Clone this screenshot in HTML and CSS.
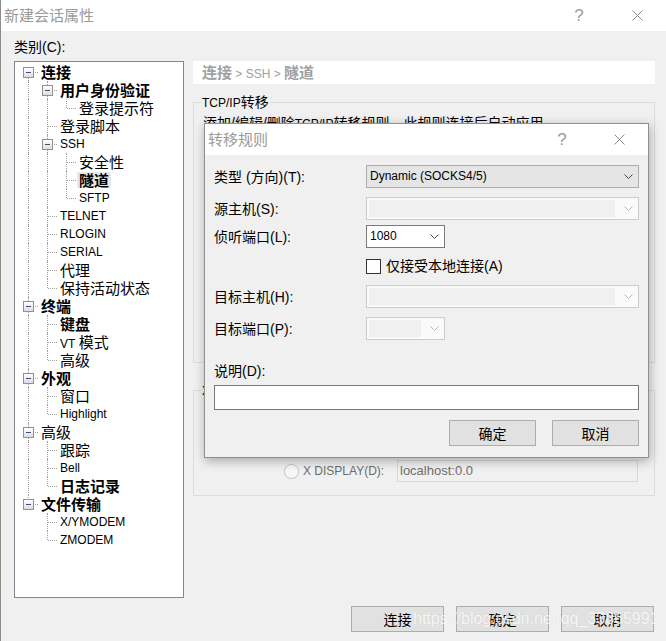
FILE: index.html
```html
<!DOCTYPE html>
<html lang="zh-CN">
<head>
<meta charset="utf-8">
<title>新建会话属性</title>
<link rel="stylesheet" href="styles.css">
</head>
<body>
<div class="window">
  <div class="titlebar">
    <span class="title">新建会话属性</span>
    <span class="tb-btn tb-help">?</span>
    <span class="tb-btn"><svg class="x-icon" viewBox="0 0 11 11"><path d="M0.5 0.5L10.5 10.5M10.5 0.5L0.5 10.5"/></svg></span>
  </div>

  <div class="main">
    <div class="left">
      <div class="cat-label">类别(C):</div>
      <div class="tree">
        <div class="row"><span class="c f"><i class="bx"></i></span><span class="lb b">连接</span></div>
        <div class="row"><span class="c i"></span><span class="c t"><i class="bx"></i></span><span class="lb b">用户身份验证</span></div>
        <div class="row"><span class="c i"></span><span class="c i"></span><span class="c l"></span><span class="lb">登录提示符</span></div>
        <div class="row"><span class="c i"></span><span class="c t"></span><span class="lb">登录脚本</span></div>
        <div class="row"><span class="c i"></span><span class="c t"><i class="bx"></i></span><span class="lb en">SSH</span></div>
        <div class="row"><span class="c i"></span><span class="c i"></span><span class="c t"></span><span class="lb">安全性</span></div>
        <div class="row"><span class="c i"></span><span class="c i"></span><span class="c t"></span><span class="lb b sel">隧道</span></div>
        <div class="row"><span class="c i"></span><span class="c i"></span><span class="c l"></span><span class="lb en">SFTP</span></div>
        <div class="row"><span class="c i"></span><span class="c t"></span><span class="lb en">TELNET</span></div>
        <div class="row"><span class="c i"></span><span class="c t"></span><span class="lb en">RLOGIN</span></div>
        <div class="row"><span class="c i"></span><span class="c t"></span><span class="lb en">SERIAL</span></div>
        <div class="row"><span class="c i"></span><span class="c t"></span><span class="lb">代理</span></div>
        <div class="row"><span class="c i"></span><span class="c l"></span><span class="lb">保持活动状态</span></div>
        <div class="row"><span class="c t"><i class="bx"></i></span><span class="lb b">终端</span></div>
        <div class="row"><span class="c i"></span><span class="c t"></span><span class="lb b">键盘</span></div>
        <div class="row"><span class="c i"></span><span class="c t"></span><span class="lb"><span class="en">VT</span> 模式</span></div>
        <div class="row"><span class="c i"></span><span class="c l"></span><span class="lb">高级</span></div>
        <div class="row"><span class="c t"><i class="bx"></i></span><span class="lb b">外观</span></div>
        <div class="row"><span class="c i"></span><span class="c t"></span><span class="lb">窗口</span></div>
        <div class="row"><span class="c i"></span><span class="c l"></span><span class="lb en">Highlight</span></div>
        <div class="row"><span class="c t"><i class="bx"></i></span><span class="lb">高级</span></div>
        <div class="row"><span class="c i"></span><span class="c t"></span><span class="lb">跟踪</span></div>
        <div class="row"><span class="c i"></span><span class="c t"></span><span class="lb en">Bell</span></div>
        <div class="row"><span class="c i"></span><span class="c l"></span><span class="lb b">日志记录</span></div>
        <div class="row"><span class="c l"><i class="bx"></i></span><span class="lb b">文件传输</span></div>
        <div class="row"><span class="c"></span><span class="c t"></span><span class="lb en">X/YMODEM</span></div>
        <div class="row"><span class="c"></span><span class="c l"></span><span class="lb en">ZMODEM</span></div>
      </div>
    </div>

    <div class="right">
      <div class="crumb">连接<span class="crumb-sep"> &gt; SSH &gt; </span>隧道</div>
      <fieldset class="group g1">
        <legend><span class="en">TCP/IP</span>转移</legend>
        <div class="g1-body">
          <p>添加/编辑/删除<span class="en">TCP/IP</span>转移规则，此规则连接后自动应用</p>
        </div>
      </fieldset>
      <fieldset class="group g2">
        <legend><span class="en">X11</span>转移</legend>
        <div class="g2-body">
          <div class="xrow">
            <span class="radio"></span>
            <span class="xlabel">X DISPLAY(D):</span>
            <span class="xinput">localhost:0.0</span>
          </div>
        </div>
      </fieldset>
    </div>
  </div>

  <div class="footer">
    <button class="btn">连接</button>
    <button class="btn">确定</button>
    <button class="btn">取消</button>
  </div>

  <div class="dialog">
    <div class="dlg-title">
      <span class="title">转移规则</span>
      <span class="tb-btn dlg-help">?</span>
      <span class="tb-btn"><svg class="x-icon" viewBox="0 0 11 11"><path d="M0.5 0.5L10.5 10.5M10.5 0.5L0.5 10.5"/></svg></span>
    </div>
    <div class="dlg-body">
      <div class="frow">
        <span class="flabel">类型 (方向)(T):</span>
        <div class="combo wide list"><span class="val">Dynamic (SOCKS4/5)</span><svg class="chev" viewBox="0 0 9 5"><path d="M0.5 0.5L4.5 4.5L8.5 0.5"/></svg></div>
      </div>
      <div class="frow r2">
        <span class="flabel">源主机(S):</span>
        <div class="combo wide dis"><span class="inner"></span><svg class="chev" viewBox="0 0 9 5"><path d="M0.5 0.5L4.5 4.5L8.5 0.5"/></svg></div>
      </div>
      <div class="frow r3">
        <span class="flabel">侦听端口(L):</span>
        <div class="combo narrow edit"><span class="val">1080</span><svg class="chev" viewBox="0 0 9 5"><path d="M0.5 0.5L4.5 4.5L8.5 0.5"/></svg></div>
      </div>
      <div class="cbx-row">
        <span class="cbx"></span><span class="cbx-text">仅接受本地连接(A)</span>
      </div>
      <div class="frow r5">
        <span class="flabel">目标主机(H):</span>
        <div class="combo wide dis"><span class="inner"></span><svg class="chev" viewBox="0 0 9 5"><path d="M0.5 0.5L4.5 4.5L8.5 0.5"/></svg></div>
      </div>
      <div class="frow r6">
        <span class="flabel">目标端口(P):</span>
        <div class="combo narrow dis"><span class="inner"></span><svg class="chev" viewBox="0 0 9 5"><path d="M0.5 0.5L4.5 4.5L8.5 0.5"/></svg></div>
      </div>
      <div class="desc-label">说明(D):</div>
      <div class="desc-input"></div>
      <div class="dlg-buttons">
        <button class="btn dbtn">确定</button>
        <button class="btn dbtn">取消</button>
      </div>
    </div>
  </div>

  <div class="watermark">https://blog.csdn.net/qq_33865991</div>
</div>
</body>
</html>
```

FILE: styles.css
```css
* {
  box-sizing: border-box;
  margin: 0;
  padding: 0;
}

html, body {
  width: 666px;
  height: 641px;
  overflow: hidden;
}

body {
  background: #f0f0f0;
  border-left: 1px solid #8c8c8c;
  font-family: "Liberation Sans", "Noto Sans CJK SC", sans-serif;
  font-size: 14px;
  color: #000;
}

.en {
  font-size: 12px;
}

.window {
  position: relative;
  width: 665px;
  height: 641px;
  display: flex;
  flex-direction: column;
}

/* title bar */
.titlebar {
  flex: none;
  height: 31px;
  background: #fff;
  display: flex;
  align-items: center;
  padding: 0 6px 0 3px;
}

.title {
  flex: 1;
  font-size: 15px;
  line-height: 20px;
  color: #9a9a9a;
}

.tb-btn {
  width: 46px;
  height: 31px;
  display: flex;
  align-items: center;
  justify-content: center;
  color: #9a9a9a;
  font-size: 17px;
}

.tb-help {
  margin-right: 12px;
}

.x-icon {
  width: 11px;
  height: 11px;
  fill: none;
  stroke: #8a8a8a;
  stroke-width: 1;
}

/* main area */
.main {
  flex: 1;
  display: flex;
  gap: 9px;
  padding: 7px 0 0 13px;
}

.left {
  width: 170px;
  flex: none;
}

.cat-label {
  height: 23px;
  line-height: 18px;
  font-size: 14px;
}

.tree {
  height: 537px;
  border: 1px solid #828790;
  background: #fff;
  padding: 1px 0 0 4px;
  overflow: hidden;
}

.row {
  display: flex;
  align-items: center;
  height: 18px;
}

.c {
  position: relative;
  flex: none;
  width: 19px;
  height: 18px;
}

.c.i::before,
.c.t::before,
.c.l::before,
.c.f::before {
  content: "";
  position: absolute;
  left: 9px;
  top: 0;
  bottom: 0;
  border-left: 1px dotted #a0a0a0;
}

.c.l::before {
  bottom: 9px;
}

.c.f::before {
  top: 9px;
}

.c.t::after,
.c.l::after,
.c.f::after {
  content: "";
  position: absolute;
  left: 10px;
  right: 0;
  top: 9px;
  border-top: 1px dotted #a0a0a0;
}

.bx {
  position: absolute;
  left: 4px;
  top: 4px;
  width: 11px;
  height: 11px;
  border: 1px solid #919191;
  background: linear-gradient(#ffffff, #dedede);
  z-index: 1;
}

.bx::after {
  content: "";
  position: absolute;
  left: 2px;
  top: 4px;
  width: 5px;
  height: 1px;
  background: #3a4f80;
}

.lb {
  margin-left: 1px;
  padding: 0 2px;
  height: 16px;
  line-height: 16px;
  font-size: 15px;
  white-space: nowrap;
  font-family: "Noto Sans CJK SC", "Liberation Sans", sans-serif;
}

.lb .en,
.lb.en {
  font-family: "Liberation Sans", sans-serif;
  font-size: 12px;
}

.lb.b {
  font-weight: 700;
}

.lb.sel {
  background: #e8e8e8;
}

/* right side */
.right {
  width: 462px;
  flex: none;
  padding-top: 23px;
}

.crumb {
  height: 23px;
  line-height: 23px;
  background: #fff;
  padding-left: 9px;
  color: #a0a0a0;
  font-weight: 700;
  font-size: 15px;
}

.crumb-sep {
  font-weight: 400;
  font-size: 12px;
}

.group {
  border: 1px solid #dcdcdc;
  padding: 0 7px;
  min-width: 0;
}

.group legend {
  padding: 0 1px;
  font-size: 14px;
  line-height: 18px;
}

.g1 {
  margin-top: 9px;
}

.g1-body {
  height: 248px;
}

.g1-body p {
  margin: 2px 0 0 2px;
  line-height: 18px;
}

.g2 {
  margin-top: 18px;
}

.g2-body {
  height: 95px;
  display: flex;
  flex-direction: column;
  justify-content: flex-end;
  padding-bottom: 13px;
}

.xrow {
  display: flex;
  align-items: center;
  height: 22px;
  padding-left: 83px;
}

.radio {
  flex: none;
  width: 15px;
  height: 15px;
  border: 1px solid #c4c4c4;
  border-radius: 50%;
  background: #f7f7f7;
}

.xlabel {
  flex: none;
  width: 94px;
  margin-left: 4px;
  color: #6d6d6d;
  font-size: 12px;
}

.xinput {
  flex: none;
  width: 241px;
  height: 22px;
  border: 1px solid #d9d9d9;
  background: #f0f0f0;
  color: #6d6d6d;
  font-size: 13px;
  line-height: 20px;
  padding-left: 2px;
}

/* footer */
.footer {
  flex: none;
  height: 35px;
  display: flex;
  justify-content: flex-end;
  gap: 12px;
  padding-right: 12px;
}

.btn {
  width: 93px;
  height: 26px;
  background: #e1e1e1;
  border: 1px solid #adadad;
  font-family: "Liberation Sans", "Noto Sans CJK SC", sans-serif;
  font-size: 14px;
  color: #000;
  display: flex;
  align-items: center;
  justify-content: center;
}

/* dialog */
.dialog {
  position: absolute;
  left: 203px;
  top: 123px;
  width: 445px;
  height: 335px;
  border: 1px solid #8f8f8f;
  background: #f0f0f0;
  box-shadow: 1px 3px 10px rgba(0, 0, 0, 0.3);
  z-index: 5;
}

.dlg-title {
  height: 31px;
  background: #fff;
  display: flex;
  align-items: center;
  padding: 0 6px 0 3px;
}

.dlg-help {
  margin-right: 11px;
}

.dlg-body {
  padding: 10px 9px 0;
}

.frow {
  display: flex;
  align-items: center;
  height: 23px;
}

.r2 { margin-top: 9px; }
.r3 { margin-top: 5px; }
.r5 { margin-top: 11px; }
.r6 { margin-top: 9px; }

.flabel {
  flex: none;
  width: 152px;
  line-height: 18px;
}

.combo {
  position: relative;
  flex: none;
  height: 23px;
  border: 1px solid #adadad;
}

.combo.wide { width: 273px; }
.combo.narrow { width: 79px; }

.combo.list {
  background: #e5e5e5;
  border-color: #adadad;
}

.combo.edit {
  background: #fff;
  border-color: #7a7a7a;
}

.combo.dis {
  background: #fafafa;
  border-color: #cccccc;
}

.combo .val {
  display: block;
  font-size: 12px;
  line-height: 21px;
  padding-left: 3px;
}

.combo .inner {
  position: absolute;
  left: 2px;
  top: 2px;
  bottom: 2px;
  right: 23px;
  background: #f0f0f0;
}

.chev {
  position: absolute;
  right: 5px;
  top: 8px;
  width: 9px;
  height: 5px;
  fill: none;
  stroke: #444;
  stroke-width: 1;
}

.combo.dis .chev {
  stroke: #b8b8b8;
}

.cbx-row {
  display: flex;
  align-items: center;
  height: 16px;
  margin-top: 10px;
  padding-left: 152px;
}

.cbx {
  flex: none;
  width: 15px;
  height: 15px;
  border: 1px solid #333;
  background: #fff;
}

.cbx-text {
  margin-left: 5px;
  line-height: 18px;
}

.desc-label {
  margin-top: 22px;
  height: 18px;
  line-height: 18px;
}

.desc-input {
  margin-top: 5px;
  height: 25px;
  border: 1px solid #7a7a7a;
  background: #fff;
}

.dlg-buttons {
  margin-top: 10px;
  display: flex;
  justify-content: flex-end;
  gap: 16px;
}

.dbtn {
  width: 87px;
  height: 26px;
}

.watermark {
  position: absolute;
  left: 412px;
  top: 609px;
  font-family: "Liberation Sans", sans-serif;
  font-size: 16px;
  line-height: 20px;
  color: rgba(255, 255, 255, 0.85);
  text-shadow: 0 0 1px rgba(0, 0, 0, 0.12);
  white-space: nowrap;
  z-index: 6;
}
```
